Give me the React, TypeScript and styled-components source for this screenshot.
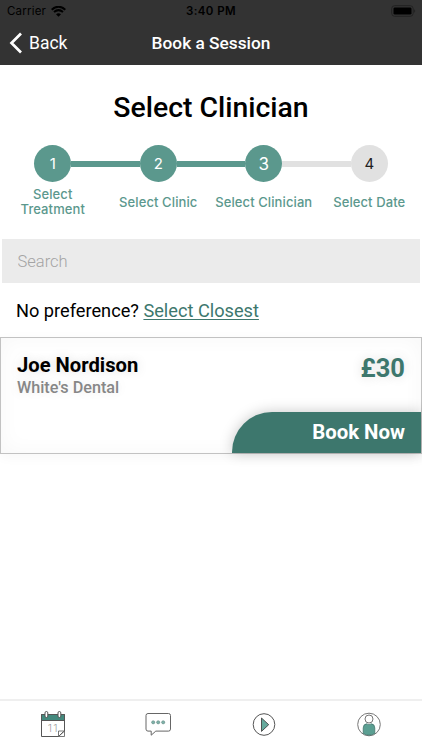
import React from "react";
import styled, { createGlobalStyle } from "styled-components";

const teal = "#5b988d";
const deepTeal = "#3d776d";

const GlobalStyle = createGlobalStyle`
  * { box-sizing: border-box; }
  body { margin: 0; background: #fff; }
`;

const Screen = styled.div`
  width: 422px;
  height: 750px;
  display: flex;
  flex-direction: column;
  overflow: hidden;
  background: #fff;
  color: #000;
  font-family: Roboto, sans-serif;
  white-space: nowrap;
`;

const Header = styled.header`
  height: 65px;
  flex: none;
  background: #333;
`;

const HeaderRow = styled.div<{ $h: number }>`
  display: grid;
  grid-template-columns: 1fr auto 1fr;
  align-items: center;
  height: ${(p) => p.$h}px;
`;

const Carrier = styled.div`
  display: flex;
  align-items: center;
  gap: 5px;
  padding-left: 7px;
  font: 400 11.5px/14px Inter, sans-serif;
  letter-spacing: 0.2px;
`;

const Clock = styled.div`
  font: 600 11.5px/14px Inter, sans-serif;
  letter-spacing: 0.4px;
`;

const BatterySlot = styled.div`
  display: flex;
  justify-content: flex-end;
  padding-right: 6px;
`;

const BackButton = styled.div`
  display: flex;
  align-items: center;
  gap: 6px;
  padding-left: 9px;
  color: #fff;
  font-size: 17.5px;
  line-height: 20px;
`;

const NavTitle = styled.div`
  color: #fff;
  font-size: 17.3px;
  font-weight: 500;
  line-height: 20px;
`;

const Title = styled.h1`
  margin: 26px 0 0;
  height: 33px;
  font-size: 28.4px;
  line-height: 34px;
  font-weight: 500;
  text-align: center;
`;

const Steps = styled.div`
  display: grid;
  grid-template-columns: repeat(4, 1fr);
  height: 97px;
  padding-top: 21px;
  flex: none;
`;

const Step = styled.div`
  display: flex;
  flex-direction: column;
`;

const Track = styled.div`
  display: flex;
  align-items: center;
  height: 37px;
`;

const Segment = styled.div<{ $color: string }>`
  flex: 1;
  height: 6px;
  background: ${(p) => p.$color};
`;

const Dot = styled.div<{ $pending?: boolean; $size: number }>`
  width: 37px;
  height: 37px;
  border-radius: 50%;
  display: flex;
  align-items: center;
  justify-content: center;
  background: ${(p) => (p.$pending ? "#e1e1e1" : teal)};
  color: ${(p) => (p.$pending ? "#222" : "#fff")};
  font: 400 ${(p) => p.$size}px/20px Inter, sans-serif;
`;

const StepLabel = styled.div`
  display: flex;
  align-items: center;
  justify-content: center;
  height: 32px;
  margin-top: 4px;
  color: ${teal};
  font: 500 13px/15px Inter, sans-serif;
  letter-spacing: 0.1px;
  text-align: center;
  white-space: pre;
`;

const SearchField = styled.input`
  height: 44px;
  flex: none;
  margin: 18px 2px 0;
  padding: 0 15.5px;
  border: 0;
  border-radius: 0;
  outline: none;
  background: #ebebeb;
  font: 300 16.5px/20px Roboto, sans-serif;
  &::placeholder { color: #a4a4a4; opacity: 1; }
`;

const Preference = styled.div`
  height: 54px;
  flex: none;
  padding: 17px 16px 0;
  font-size: 18.2px;
  line-height: 22px;
`;

const ClosestLink = styled.span`
  color: ${deepTeal};
  text-decoration: underline;
  text-decoration-thickness: 1px;
  text-underline-offset: 2px;
`;

const Card = styled.article`
  height: 117px;
  flex: none;
  display: flex;
  flex-direction: column;
  justify-content: space-between;
  border: 1px solid #c2c2c2;
  background: #fff;
  box-shadow: inset 0 0 22px rgba(0, 0, 0, 0.035), 0 3px 12px rgba(0, 0, 0, 0.035);
`;

const CardTop = styled.div`
  display: flex;
  justify-content: space-between;
  padding: 15px 16px 0 16px;
`;

const Name = styled.div`
  font-size: 20.2px;
  line-height: 24px;
  font-weight: 700;
  text-shadow: 0 0 12px rgba(0, 0, 0, 0.14);
`;

const Practice = styled.div`
  color: #878787;
  font-size: 16.2px;
  line-height: 21px;
  font-weight: 500;
  text-shadow: 0 0 12px rgba(0, 0, 0, 0.1);
`;

const Price = styled.div`
  color: ${deepTeal};
  font-size: 25.5px;
  line-height: 30px;
  font-weight: 700;
  text-shadow: 0 0 12px rgba(0, 0, 0, 0.14);
`;

const BookButton = styled.div`
  align-self: flex-end;
  width: 189px;
  height: 41px;
  padding-right: 16px;
  border-radius: 40px 0 0 0;
  background: ${deepTeal};
  color: #fff;
  font-size: 20.4px;
  line-height: 41px;
  font-weight: 700;
  text-align: right;
  box-shadow: 0 0 14px rgba(0, 0, 0, 0.22);
`;

const TabBar = styled.nav`
  display: grid;
  grid-template-columns: repeat(4, 1fr);
  height: 51px;
  margin-top: auto;
  border-top: 2px solid #efefef;
`;

const Tab = styled.div`
  display: flex;
  justify-content: center;
  padding-top: 8px;
`;

const steps = [
  { label: "Select\nTreatment", before: "transparent", after: teal, size: 15 },
  { label: "Select Clinic", before: teal, after: teal, size: 15 },
  { label: "Select Clinician", before: teal, after: "#e1e1e1", size: 17 },
  { label: "Select Date", before: "#e1e1e1", after: "transparent", size: 15, pending: true },
];

const WifiIcon = () => (
  <svg width="15" height="11" viewBox="0 0 15 11">
    <path d="M.7 3.7Q7.5-2.3 14.3 3.7M3 6.1Q7.5 2.2 12 6.1" fill="none" stroke="#000" strokeWidth="2" />
    <path d="M5 8.2Q7.5 6.2 10 8.2L7.5 10.8Z" />
  </svg>
);

const BatteryIcon = () => (
  <svg width="25" height="12" viewBox="0 0 25 12">
    <rect x=".7" y=".7" width="21.5" height="10.6" rx="3" fill="none" stroke="#222" />
    <rect x="2.5" y="2.4" width="18" height="7.2" rx="1.4" />
    <path d="M23.5 4q1.4 2 0 4z" fill="#151515" />
  </svg>
);

const CalendarIcon = () => (
  <svg width="26" height="30" viewBox="0 0 26 30" fill="none" stroke="#555">
    <path d="M1.5 5.5h23v6h-23z" fill="#43897d" />
    <path d="M1.5 11v16.5h17l6-5.5V5.5h-23V12" />
    <path d="M18.5 27.5v-5.5h6M20 26l3.5-3.5M24.5 22v5.5h-6" strokeWidth=".8" />
    <rect x="5" y="2.5" width="2.8" height="6" rx="1.4" fill="#fff" />
    <rect x="18" y="2.5" width="2.8" height="6" rx="1.4" fill="#fff" />
    <text x="13" y="23" textAnchor="middle" fill="#888" stroke="none" fontFamily="Roboto, sans-serif" fontWeight="300" fontSize="10">11</text>
  </svg>
);

const ChatIcon = () => (
  <svg width="27" height="30" viewBox="0 0 27 30">
    <path d="M3 4.5h20.5q2 0 2 2v13.6q0 2-2 2H10.8l-4.6 4.1v-4.1H3q-2 0-2-2V6.5q0-2 2-2z" fill="#fff" stroke="#666" />
    <g fill="#7fb3aa" stroke="#5b7f79" strokeWidth=".5">
      <circle cx="8.2" cy="13.3" r="1.6" />
      <circle cx="13.2" cy="13.3" r="1.6" />
      <circle cx="18.2" cy="13.3" r="1.6" />
    </g>
  </svg>
);

const PlayIcon = () => (
  <svg width="24" height="30" viewBox="0 0 24 30">
    <circle cx="12" cy="15.5" r="10.8" fill="#fff" stroke="#555" />
    <path d="M9.5 9l7.2 6.7-7.2 6.7z" fill="#65aa9d" stroke="#444" strokeWidth=".9" />
  </svg>
);

const ProfileIcon = () => (
  <svg width="26" height="30" viewBox="0 0 26 30">
    <circle cx="13" cy="15.5" r="11.3" fill="#fff" stroke="#777" />
    <circle cx="13" cy="10" r="4" fill="#fff" stroke="#777" />
    <path d="M7.2 24.5v-5.500q0-4 3.600-4.200 2.200 1.700 4.400 0Q18.800 15 18.800 19v5.500q-5.800 3.400-11.600 0z" fill="#5b9f92" stroke="#3f6f67" strokeWidth=".7" />
  </svg>
);

export default function App() {
  return (
    <Screen>
      <GlobalStyle />
      <Header>
        <HeaderRow $h={22}>
          <Carrier>Carrier<WifiIcon /></Carrier>
          <Clock>3:40 PM</Clock>
          <BatterySlot><BatteryIcon /></BatterySlot>
        </HeaderRow>
        <HeaderRow $h={42}>
          <BackButton>
            <svg width="14" height="22" viewBox="0 0 14 22">
              <path d="M12 1.5L2.5 11l9.5 9.5" fill="none" stroke="#fff" strokeWidth="2.7" />
            </svg>
            Back
          </BackButton>
          <NavTitle>Book a Session</NavTitle>
          <span />
        </HeaderRow>
      </Header>
      <Title>Select Clinician</Title>
      <Steps>
        {steps.map((s, i) => (
          <Step key={s.label}>
            <Track>
              <Segment $color={s.before} />
              <Dot $pending={s.pending} $size={s.size}>{i + 1}</Dot>
              <Segment $color={s.after} />
            </Track>
            <StepLabel>{s.label}</StepLabel>
          </Step>
        ))}
      </Steps>
      <SearchField placeholder="Search" />
      <Preference>No preference? <ClosestLink>Select Closest</ClosestLink></Preference>
      <Card>
        <CardTop>
          <div>
            <Name>Joe Nordison</Name>
            <Practice>White's Dental</Practice>
          </div>
          <Price>£30</Price>
        </CardTop>
        <BookButton>Book Now</BookButton>
      </Card>
      <TabBar>
        <Tab><CalendarIcon /></Tab>
        <Tab><ChatIcon /></Tab>
        <Tab><PlayIcon /></Tab>
        <Tab><ProfileIcon /></Tab>
      </TabBar>
    </Screen>
  );
}
